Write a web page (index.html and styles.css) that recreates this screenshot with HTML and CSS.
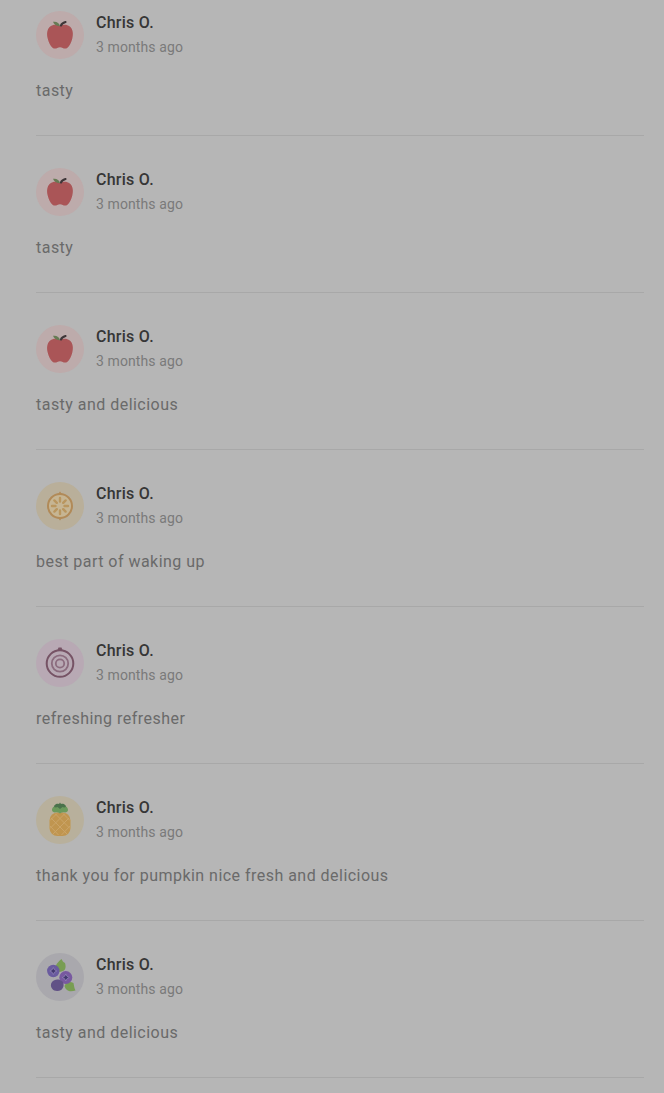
FILE: index.html
```html
<!DOCTYPE html>
<html lang="en">
<head>
    <meta charset="UTF-8">
    <meta name="viewport" content="width=device-width, initial-scale=1.0">
    <title>Reviews</title>
    <link rel="stylesheet" href="styles.css">
</head>
<body>
    <!-- Shared avatar drawings -->
    <svg class="sprite" width="0" height="0">
        <symbol id="apple" viewBox="0 0 48 48">
            <path fill="#aa5557" d="M24 15c-3-1.600-7-1.600-9.800.5-3.200 2.600-3.700 7.300-2.500 12 .9 3.700 2.500 7.500 4.800 9.300 1.700 1.200 3.500.9 4.800.2 1.500-.9 3.900-.9 5.400 0 1.300.7 3.100 1 4.800-.2 2.300-1.800 3.900-5.600 4.800-9.300 1.200-4.700.7-9.400-2.500-12-2.800-2.100-6.800-2.100-9.800-.5z"/>
            <path fill="#667b54" d="M24 15.200c-3.500.2-6-1.500-7-4.400 3.500-.6 6.300 1 7 4.400z"/>
            <path fill="none" stroke="#3e3638" stroke-width="2.200" stroke-linecap="round" d="M25 14.500c.5-1.700 2-2.800 4.500-3.500"/>
        </symbol>
        <symbol id="orange" viewBox="0 0 48 48">
            <circle cx="24" cy="24" r="12" fill="#c6b593" stroke="#b18a58" stroke-width="2"/>
            <path fill="#b18a58" d="M22 12l2-2.500 2 2.500zM22 36l2 2.500 2-2.500z"/>
            <g stroke="#b9965f" stroke-width="2.400" stroke-linecap="round">
                <path d="M24 19.500v-3.500M24 28.500v3.500M19.500 24h-3.500M28.500 24h3.500M20.800 20.800l-2.400-2.400M27.200 27.200l2.400 2.400M27.200 20.800l2.400-2.400M20.800 27.200l-2.400 2.400"/>
            </g>
        </symbol>
        <symbol id="onion" viewBox="0 0 48 48">
            <path fill="#765365" d="M21.500 11l1-2.500h3l1 2.500z"/>
            <g fill="none">
                <circle cx="24" cy="24.500" r="13.300" stroke="#765365" stroke-width="2"/>
                <circle cx="24" cy="24.500" r="8.200" stroke="#8b6c7e" stroke-width="1.800"/>
                <circle cx="24" cy="24.500" r="4.200" stroke="#8b6c7e" stroke-width="1.800"/>
            </g>
        </symbol>
        <symbol id="pineapple" viewBox="0 0 48 48">
            <rect x="13.500" y="16.500" width="21" height="23.500" rx="8" fill="#c0954f"/>
            <path fill="none" stroke="#caa468" stroke-width="1" d="M15 22l16 16M19 17.500l15 15M27 17.500l7 7M14 30l8.500 9M33 22L17 38M29 17.500l-15 15M21 17.500l-7 7M34 30l-8.500 9"/>
            <path fill="#6b9a5c" d="M16 14c0-3 3-5 8-5s8 2 8 5c0 1.500-1.500 2.500-3 2.500-2-.5-3.500 0-5 1-1.500-1-3-1.500-5-1-1.500 0-3-1-3-2.500z"/>
            <path fill="#4a724b" d="M18 10c1.500-2.200 3.500-2.500 5-2l1-1.500 1 1.500c1.500-.5 3.500-.2 5 2-.5 2-2.500 1.500-3.500 1L24 13l-2.500-2c-1 .5-3 1-3.500-1z"/>
        </symbol>
        <symbol id="berries" viewBox="0 0 48 48">
            <path fill="#789d52" d="M22 19c-5-4-1.500-9 3.500-13 1 2 1.500 3 3.500 4 1.500 5 .5 9-7 9z"/>
            <path fill="#789d52" d="M28.500 33c1.500-4 5-5 9-3 .5 2 .5 5 2 7.500-5 1.500-9.500 1-11-4.500z"/>
            <circle cx="17.300" cy="18" r="6.200" fill="#6a5b9f"/>
            <circle cx="29.800" cy="24.500" r="6.500" fill="#7859a0"/>
            <path fill="#615186" d="M16 29c2-3 7-3.500 10-1 2.500 2.500 2 7-1 9-2.500 1.500-7 1.500-9-1.500-1.500-2-1.500-4.500 0-6.500z"/>
            <path fill="#443970" stroke="#9589bc" stroke-width=".7" d="M17.300 14.500l1.200 2.300 2.300 1.200-2.300 1.200-1.200 2.300-1.200-2.300-2.300-1.200 2.300-1.200zM29.800 21l1.200 2.300 2.300 1.200-2.300 1.200-1.200 2.300-1.200-2.300-2.300-1.200 2.300-1.200z"/>
        </symbol>
    </svg>

    <main class="reviews">
        <article class="review">
            <header class="author">
                <svg class="avatar avatar-apple"><use href="#apple"/></svg>
                <div class="author-info">
                    <div class="name">Chris O.</div>
                    <div class="date">3 months ago</div>
                </div>
            </header>
            <p class="comment">tasty</p>
        </article>
        <article class="review">
            <header class="author">
                <svg class="avatar avatar-apple"><use href="#apple"/></svg>
                <div class="author-info">
                    <div class="name">Chris O.</div>
                    <div class="date">3 months ago</div>
                </div>
            </header>
            <p class="comment">tasty</p>
        </article>
        <article class="review">
            <header class="author">
                <svg class="avatar avatar-apple"><use href="#apple"/></svg>
                <div class="author-info">
                    <div class="name">Chris O.</div>
                    <div class="date">3 months ago</div>
                </div>
            </header>
            <p class="comment">tasty and delicious</p>
        </article>
        <article class="review">
            <header class="author">
                <svg class="avatar avatar-orange"><use href="#orange"/></svg>
                <div class="author-info">
                    <div class="name">Chris O.</div>
                    <div class="date">3 months ago</div>
                </div>
            </header>
            <p class="comment">best part of waking up</p>
        </article>
        <article class="review">
            <header class="author">
                <svg class="avatar avatar-onion"><use href="#onion"/></svg>
                <div class="author-info">
                    <div class="name">Chris O.</div>
                    <div class="date">3 months ago</div>
                </div>
            </header>
            <p class="comment">refreshing refresher</p>
        </article>
        <article class="review">
            <header class="author">
                <svg class="avatar avatar-pineapple"><use href="#pineapple"/></svg>
                <div class="author-info">
                    <div class="name">Chris O.</div>
                    <div class="date">3 months ago</div>
                </div>
            </header>
            <p class="comment">thank you for pumpkin nice fresh and delicious</p>
        </article>
        <article class="review">
            <header class="author">
                <svg class="avatar avatar-berries"><use href="#berries"/></svg>
                <div class="author-info">
                    <div class="name">Chris O.</div>
                    <div class="date">3 months ago</div>
                </div>
            </header>
            <p class="comment">tasty and delicious</p>
        </article>
    </main>
</body>
</html>
```

FILE: styles.css
```css
body {
    margin: 0;
    background-color: #b6b6b6;
    color: #6a6a6a;
    font-family: Roboto, "Liberation Sans", sans-serif;
}
.sprite {
    display: block;
}
.reviews {
    padding: 0 20px 0 36px;
}
.review {
    padding: 32px 0;
    border-bottom: 1px solid #a8a8a8;
}
.review:first-child {
    padding-top: 11px;
}
.author {
    display: flex;
    gap: 12px;
    height: 48px;
}
.avatar {
    width: 48px;
    height: 48px;
    border-radius: 50%;
}
.avatar-apple {
    background-color: #bdabab;
}
.avatar-orange {
    background-color: #b9af9a;
}
.avatar-onion {
    background-color: #b8a9b4;
}
.avatar-pineapple {
    background-color: #b8b09c;
}
.avatar-berries {
    background-color: #a9a8ad;
}
.name {
    color: #363636;
    font-size: 16px;
    font-weight: 500;
    line-height: 24px;
    letter-spacing: 0.25px;
}
.date {
    color: #7a7a7a;
    font-size: 14px;
    line-height: 24px;
    letter-spacing: 0.1px;
}
.comment {
    margin: 20px 0 0;
    font-size: 16px;
    line-height: 24px;
    letter-spacing: 0.47px;
}
```
